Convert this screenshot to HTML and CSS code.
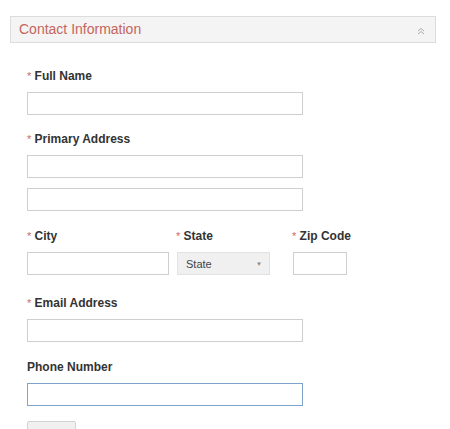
FILE: index.html
```html
<!DOCTYPE html>
<html>
<head>
<meta charset="utf-8">
<link rel="stylesheet" href="styles.css">
</head>
<body>
<div class="panel-head">
  <span class="panel-title">Contact Information</span>
  <svg class="chev" width="8" height="8" viewBox="0 0 8 8"><path d="M1 4 L4 1.5 L7 4 M1 7 L4 4.5 L7 7" fill="none" stroke="#aaa" stroke-width="1"/></svg>
</div>
<form class="form">
  <div class="group g1">
    <div class="label"><span class="req">*</span> Full Name</div>
    <div class="input wide"></div>
  </div>
  <div class="group g2">
    <div class="label"><span class="req">*</span> Primary Address</div>
    <div class="input wide"></div>
    <div class="input wide second"></div>
  </div>
  <div class="row g3">
    <div class="col city">
      <div class="label"><span class="req">*</span> City</div>
      <div class="input city-in"></div>
    </div>
    <div class="col state">
      <div class="label"><span class="req">*</span> State</div>
      <div class="select"><span>State</span><span class="arrow">&#9660;</span></div>
    </div>
    <div class="col zip">
      <div class="label"><span class="req">*</span> Zip Code</div>
      <div class="input zip-in"></div>
    </div>
  </div>
  <div class="group g4">
    <div class="label"><span class="req">*</span> Email Address</div>
    <div class="input wide"></div>
  </div>
  <div class="group g5">
    <div class="label">Phone Number</div>
    <div class="input wide focus"></div>
  </div>
  <div class="btn"></div>
</form>
</body>
</html>
```
FILE: styles.css
```css
html, body { margin: 0; padding: 0; background: #fff; }
body { font-family: "Liberation Sans", Arial, sans-serif; width: 450px; height: 429px; overflow: hidden; }
.panel-head {
  margin: 16px 0 0 10px;
  width: 416px;
  height: 25px;
  background: #f4f4f4;
  border: 1px solid #dcdcdc;
  display: flex;
  align-items: center;
  justify-content: space-between;
  padding: 0 0 0 8px;
}
.panel-title { color: #c4655d; font-size: 14px; margin-top: -1px; }
.chev { margin-right: 10px; margin-top: 3px; }
.form { padding-left: 27px; margin: 0; }
.label { font-size: 12px; font-weight: bold; color: #333; line-height: 16px; height: 16px; margin-bottom: 8px; white-space: nowrap; }
.req { color: #d06a62; font-weight: normal; font-size: 11px; }
.input { height: 21px; border: 1px solid #cfcfcf; background: #fff; }
.wide { width: 274px; }
.second { margin-top: 10px; }
.g1 { margin-top: 25px; }
.g2 { margin-top: 16px; }
.g3 { margin-top: 17px; }
.g4 { margin-top: 20px; }
.g5 { margin-top: 17px; }
.row { display: flex; }
.city { width: 150px; }
.city-in { width: 140px; }
.state { width: 116px; }
.state .label { margin-left: -1px; }
.select {
  width: 83px; height: 21px; border: 1px solid #e2e2e2; background: #f0f0f0;
  display: flex; align-items: center; justify-content: space-between;
  font-size: 11px; color: #444; padding: 0 0 0 8px;
}
.arrow { font-size: 6px; color: #888; margin-right: 7px; }
.zip .label { margin-left: -1px; }
.zip-in { width: 52px; }
.focus { border-color: #7fa2c8; }
.btn { margin-top: 15px; width: 47px; height: 20px; background: #f0f0f0; border: 1px solid #d3d3d3; border-radius: 2px; }
```
